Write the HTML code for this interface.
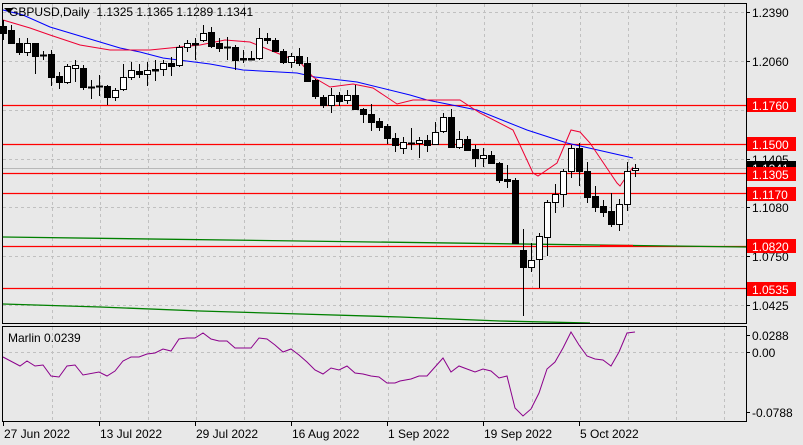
<!DOCTYPE html>
<html><head><meta charset="utf-8"><style>
html,body{margin:0;padding:0;background:#e8e8e8;}
svg{display:block;font-family:"Liberation Sans","DejaVu Sans",sans-serif;font-size:12px;}
</style></head><body>
<svg id="s" width="803" height="445" xmlns="http://www.w3.org/2000/svg">
<rect width="803" height="445" fill="#e8e8e8"/>
<g id="grid" stroke="#c0c0c0" stroke-dasharray="3,3" stroke-width="1"></g>
<g id="lines"></g>
<g id="candles"></g>
<rect x="2.5" y="3.5" width="744" height="320" fill="none" stroke="#000"/>
<rect x="2.5" y="326.5" width="744" height="95" fill="none" stroke="#000"/>
<g id="axis" fill="#000"></g>
<text x="9" y="16" fill="#000">GBPUSD,Daily&#160; 1.1325 1.1365 1.1289 1.1341</text>
<polygon points="4,8 14,8 9,13" fill="#000"/>
<text x="8" y="342" fill="#000">Marlin 0.0239</text>
</svg>
<script>
var NS="http://www.w3.org/2000/svg";
function el(p,t,a,txt){var e=document.createElementNS(NS,t);for(var k in a)e.setAttribute(k,a[k]);if(txt!==undefined)e.textContent=txt;document.getElementById(p).appendChild(e);return e;}
[52,100,148,196,244,292,340,388,436,484,532,580,628,676,724].forEach(function(x){el('grid','line',{x1:x+.5,y1:4,x2:x+.5,y2:323});el('grid','line',{x1:x+.5,y1:327,x2:x+.5,y2:421});});
[12,61,110,159,207,256,305].forEach(function(y){el('grid','line',{x1:3,y1:y+.5,x2:746,y2:y+.5});});
el('grid','line',{x1:3,y1:352.5,x2:746,y2:352.5});
[105,144,173,193,246,288].forEach(function(y){el('lines','line',{x1:3,y1:y+.5,x2:746,y2:y+.5,stroke:'#ff0000','stroke-width':1.3});});
el('lines','line',{x1:3,y1:168.5,x2:746,y2:168.5,stroke:'#b8b8b8'});
function pl(pts,c,w){el('lines','polyline',{points:pts.map(function(p){return p.join(',')}).join(' '),fill:'none',stroke:c,'stroke-width':w||1});}
pl([[3,237],[746,247]],'#008000',1.3);
pl([[3,304],[100,307],[200,311],[300,314],[400,317],[500,321],[590,323]],'#008000',1.3);
el('lines','line',{x1:600,y1:245.5,x2:633,y2:245.5,stroke:'#ff0000','stroke-width':1.3});
pl([[3,10],[23,15],[50,27],[120,48],[140,52],[163,58],[210,64],[243,70],[297,73],[315,77],[357,82],[410,95],[427,100],[477,110],[527,130],[567,143],[633,158]],'#0000ff');
pl([[3,20],[30,28],[50,35],[80,45],[110,50],[150,50],[200,45],[225,40],[250,42],[277,53],[300,62],[313,77],[330,87],[353,84],[373,88],[397,104],[413,100],[460,100],[480,113],[513,130],[533,173],[538,176],[557,163],[571,130],[580,132],[590,143],[617,183],[620,186],[633,167]],'#ee0033');
pl([[3,357],[20,366],[27,361],[35,366],[43,365],[51,376],[59,377],[67,366],[75,365],[83,375],[99,372],[107,376],[115,371],[123,361],[131,357],[139,357],[147,354],[155,353],[163,349],[171,351],[179,339],[187,338],[195,338],[203,333],[211,339],[219,341],[227,341],[235,348],[243,348],[251,348],[259,338],[267,339],[275,345],[283,352],[291,349],[299,355],[307,362],[315,370],[323,374],[331,368],[339,370],[347,366],[355,373],[363,374],[371,376],[379,377],[387,383],[395,383],[400,381],[411,379],[419,376],[427,376],[435,367],[443,358],[451,372],[459,366],[467,369],[475,372],[483,369],[491,371],[499,378],[507,376],[515,408],[523,416],[531,409],[539,393],[547,369],[555,362],[563,348],[571,332],[579,345],[587,356],[595,359],[603,360],[611,366],[619,352],[627,333],[635,332]],'#8b008b');
var C=[[26,33,20,40],[30,43,25,44],[43,52,38,55],[52,43,38,56],[43,56,43,74],[55,55.5,51,60],[54,77,50,86],[76,82,72,89],[82,66,64,84],[68,65,60,82],[68,87,65,90],[87,87.5,80,99],[86,86.5,75,96],[86,97,85,105],[97,90,88,101],[89,77,64,91],[77,70,62,80],[71,74,64,78],[74,70,62,86],[69,70.5,60,81],[69,63,60,76],[63,66,57,76],[65,47,45,67],[47,43,40,52],[43,44.5,38,60],[40,33,25,42],[32,46,27,48],[43,48,38,52],[48,47,37,60],[47,60,45,70],[58,59.5,50,63],[58,59.5,51,60],[58,38,28,60],[38,40,33,44],[40,51,38,52],[51,62,49,64],[62,56,53,68],[56,63,48,66],[63,81,57,82],[80,96,79,99],[97,105,95,108],[105,95,88,113],[95,101,92,106],[100,95,90,104],[95,109,85,110],[109,114,108,123],[114,122,104,131],[121,127,118,131],[126,138,124,144],[138,145,133,152],[148,142,137,154],[143,143.5,128,150],[143,140,137,158],[140,145,135,152],[144,132,122,145],[131,117,113,133],[117,147,109,148],[147,139,131,149],[139,150,136,151],[149,158,145,167],[158,155,148,167],[155,163,151,163],[163,180,162,183],[179,181,165,188],[180,243,178,243],[250,267,229,316],[267,260,243,272],[259,236,233,288],[237,202,200,256],[202,194,184,213],[194,171,169,207],[171,148,145,178],[148,171,143,186],[171,197,162,203],[196,207,186,212],[206,212,200,217],[211,224,193,227],[224,204,199,231],[204,171,162,211],[170,168,164,177]];
C.forEach(function(c,i){var x=3+8*i;var o=c[0],cl=c[1],h=c[2],l=c[3];var top=Math.min(o,cl),bot=Math.max(o,cl);var bull=cl<o;
el('candles','line',{x1:x+.5,y1:h,x2:x+.5,y2:l,stroke:'#000'});
if(bot-top<1.5){el('candles','line',{x1:x-3,y1:top+.5,x2:x+4,y2:top+.5,stroke:'#000','stroke-width':2});}
else el('candles','rect',{x:x-2.5,y:top+.5,width:6,height:bot-top,fill:bull?'#fff':'#000',stroke:'#000'});});
function lab(y,t){el('axis','line',{x1:746,y1:y+.5,x2:750,y2:y+.5,stroke:'#000'});el('axis','text',{x:752,y:y+5},t);}
lab(12,'1.2390');lab(61,'1.2060');lab(159,'1.1405');lab(207,'1.1080');lab(256,'1.0750');lab(305,'1.0425');
lab(335,'0.0288');lab(352,'0.00');lab(412,'-0.0788');
function box(y,t,bg){el('axis','rect',{x:747,y:y-7,width:49,height:14,fill:bg});el('axis','text',{x:752,y:y+5,fill:'#fff'},t);}
box(168,'1.1341','#000');
box(105,'1.1760','#ff0000');box(144,'1.1500','#ff0000');box(174,'1.1305','#ff0000');box(194,'1.1170','#ff0000');box(246,'1.0820','#ff0000');box(289,'1.0535','#ff0000');
var D=[[3,'27 Jun 2022'],[99,'13 Jul 2022'],[195,'29 Jul 2022'],[291,'16 Aug 2022'],[387,'1 Sep 2022'],[483,'19 Sep 2022'],[579,'5 Oct 2022']];
D.forEach(function(d){el('axis','line',{x1:d[0]+.5,y1:421,x2:d[0]+.5,y2:426,stroke:'#000'});el('axis','text',{x:d[0]+1,y:438},d[1]);});
</script>
</body></html>
